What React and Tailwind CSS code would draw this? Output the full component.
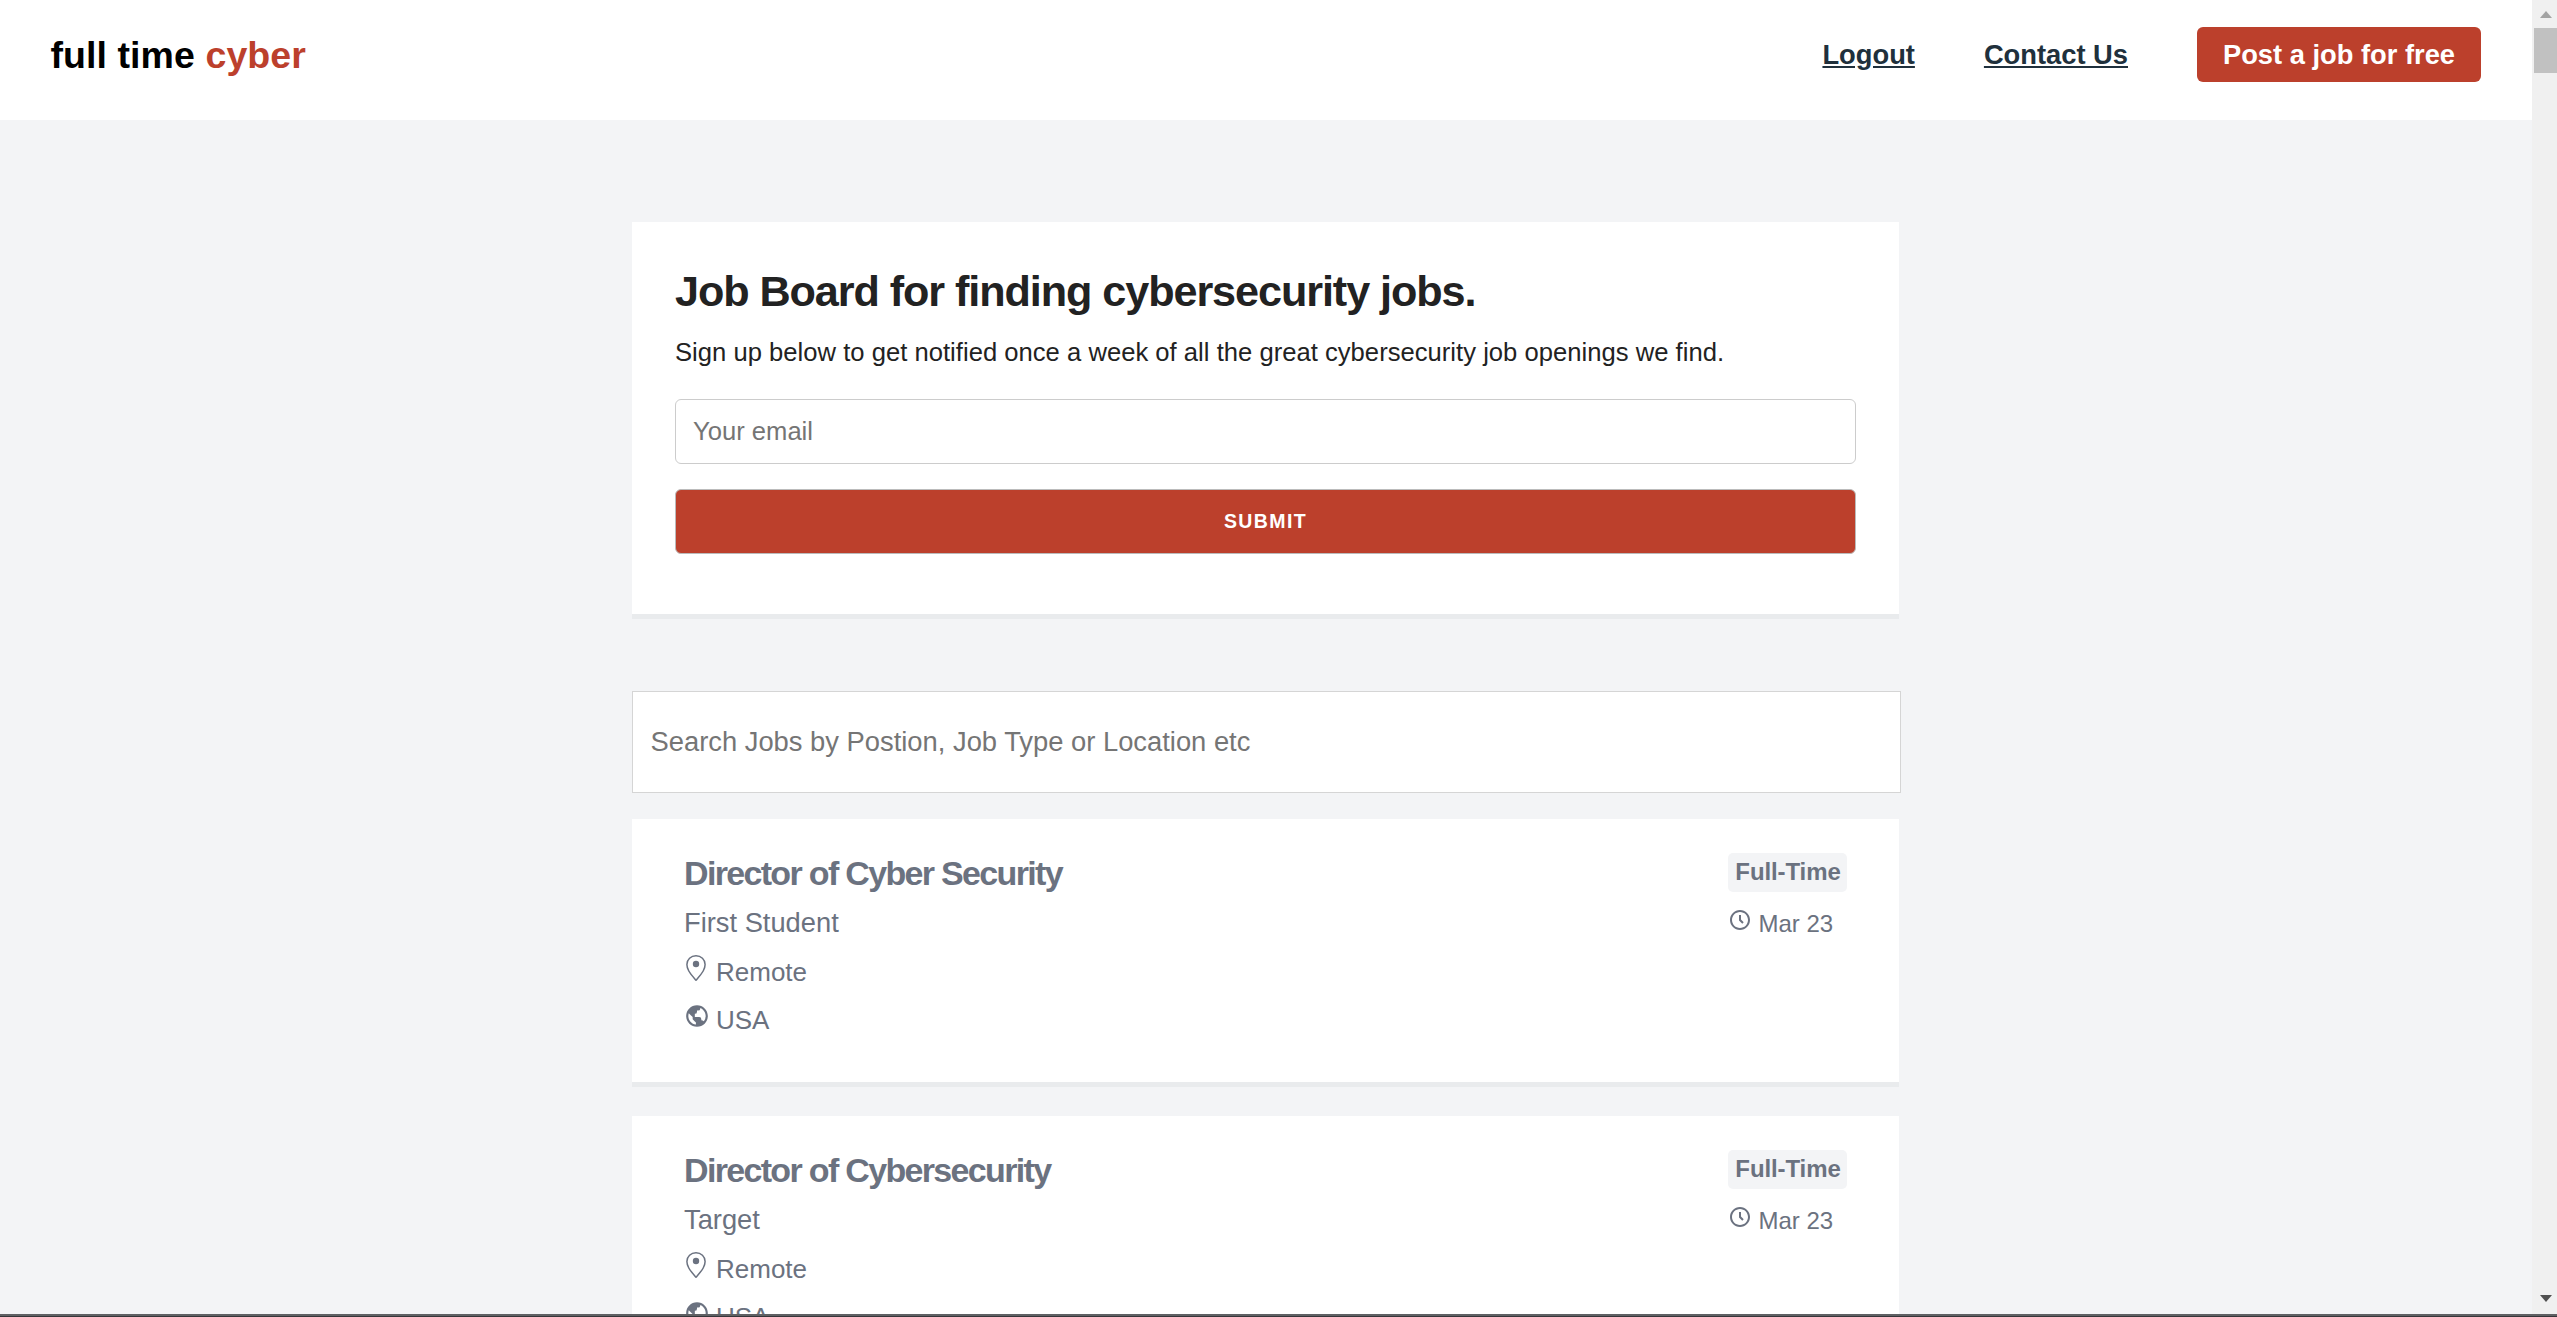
import { BiTimeFive, BiWorld } from 'react-icons/bi'

const JOBS = [
  {
    id: 1,
    title: 'Director of Cyber Security',
    company: 'First Student',
    location: 'Remote',
    country: 'USA',
    type: 'Full-Time',
    date: 'Mar 23',
  },
  {
    id: 2,
    title: 'Director of Cybersecurity',
    company: 'Target',
    location: 'Remote',
    country: 'USA',
    type: 'Full-Time',
    date: 'Mar 23',
  },
]

function PinIcon() {
  return (
    <svg className="w-[20px] h-[26px]" viewBox="0 0 20 26" fill="none">
      <path
        d="M10 .8C4.900.8.900 4.600.900 9.500c0 2.400.8 4.500 1.900 6.500C4.700 19.400 7.400 22.200 10 25.200c2.600-3 5.300-5.800 7.200-9.200 1.100-2 1.900-4.100 1.900-6.500C19.100 4.600 15.100.8 10 .8z"
        stroke="currentColor"
        strokeWidth="1.5"
      />
      <circle cx="10" cy="9" r="3.2" fill="currentColor" />
    </svg>
  )
}

function Header() {
  return (
    <header className="flex items-start justify-between h-[120px] bg-white pl-[50.5px] pr-[51px] pt-[27px] font-bold">
      <a href="#" className="text-[37.5px] leading-[56px] tracking-[0.08px] text-black">
        full time <span className="text-[#bc402c]">cyber</span>
      </a>
      <nav className="flex items-center text-[27.3px] text-[#20303c]">
        <a href="#" className="underline mr-[69px] pt-px">Logout</a>
        <a href="#" className="underline mr-[69px] pt-px">Contact Us</a>
        <a href="#" className="flex items-center justify-center w-[284px] h-[55px] pt-px rounded-[6px] bg-[#bc402c] text-white">
          Post a job for free
        </a>
      </nav>
    </header>
  )
}

function Signup() {
  return (
    <section className="h-[392px] bg-white px-[43px] pt-[43px] shadow-[0_5px_0_#e9ebed]">
      <h1 className="text-[43.2px] leading-[52px] font-bold tracking-[-0.025em] text-[#222]">
        Job Board for finding cybersecurity jobs.
      </h1>
      <p className="mt-[16px] text-[25.6px] leading-[38px] tracking-[0.02px] text-[#222]">
        Sign up below to get notified once a week of all the great cybersecurity job openings we find.
      </p>
      <input
        type="email"
        placeholder="Your email"
        className="block mt-[28px] w-full h-[65px] border border-[#ccc] rounded-[6px] px-[17px] text-[25.6px] placeholder:text-[#757575]"
      />
      <button className="block mt-[25px] w-full h-[65px] border border-[#bbb] rounded-[6px] bg-[#bc402c] text-white text-[19.5px] font-bold tracking-[1.4px]">
        SUBMIT
      </button>
    </section>
  )
}

function JobCard({ job }) {
  return (
    <article className="flex justify-between h-[263px] shrink-0 bg-white pl-[52px] pr-[52px] pt-[34px] text-[#6b7280] shadow-[0_5px_0_#e9ebed]">
      <div>
        <h2 className="-mt-px text-[34px] leading-[42px] font-bold tracking-[-1.67px]">{job.title}</h2>
        <p className="mt-[9px] text-[27.3px] leading-[40px]">{job.company}</p>
        <div className="flex mt-[10px] h-[38px] text-[26px] leading-[38px]">
          <span className="w-[32px] pl-[2px] pt-[2px]"><PinIcon /></span>
          {job.location}
        </div>
        <div className="flex mt-[10px] h-[38px] text-[26px] leading-[38px]">
          <span className="w-[32px] pt-[2px]"><BiWorld size={26} /></span>
          {job.country}
        </div>
      </div>
      <div className="w-[119px] text-[24px]">
        <div className="h-[39px] rounded-[5px] bg-[#f3f4f6] pl-px text-center leading-[38px] font-bold tracking-[-0.1px]">{job.type}</div>
        <div className="flex mt-[13px] leading-[37px]">
          <span className="w-[30.5px] pt-[3px]"><BiTimeFive size={24} /></span>
          {job.date}
        </div>
      </div>
    </article>
  )
}

function Scrollbar() {
  return (
    <div className="flex flex-col justify-between w-[25px] h-full bg-[#f0f0f0]">
      <div>
        <svg className="block w-[25px] h-[28px]" viewBox="0 0 25 28">
          <path d="M8 18h12l-6-7z" fill="#a3a3a3" />
        </svg>
        <div className="ml-[2px] h-[45px] bg-[#c1c1c1]" />
      </div>
      <svg className="block w-[25px] h-[28px]" viewBox="0 0 25 28">
        <path d="M8 9h12l-6 7z" fill="#505050" />
      </svg>
    </div>
  )
}

export default function App() {
  return (
    <div className="flex flex-col w-[2557px] h-[1317px] overflow-hidden font-['Liberation_Sans',Arial,sans-serif]">
      <div className="flex h-[1314px] shrink-0">
        <div className="w-[2532px] h-full overflow-hidden bg-[#f3f4f6]">
          <Header />
          <main className="ml-[632px] mt-[102px] w-[1267px]">
            <Signup />
            <input
              type="text"
              placeholder="Search Jobs by Postion, Job Type or Location etc"
              className="block mt-[77px] w-[1269px] h-[102px] border border-[#d5d5d5] bg-white px-[17.5px] text-[27.35px] placeholder:text-[#757575]"
            />
            <div className="flex flex-col gap-[34px] mt-[26px]">
              {JOBS.map((job) => (
                <JobCard key={job.id} job={job} />
              ))}
            </div>
          </main>
        </div>
        <Scrollbar />
      </div>
      <div className="h-[3px] shrink-0 bg-[#5f6063] border-b border-[#36363a]" />
    </div>
  )
}
